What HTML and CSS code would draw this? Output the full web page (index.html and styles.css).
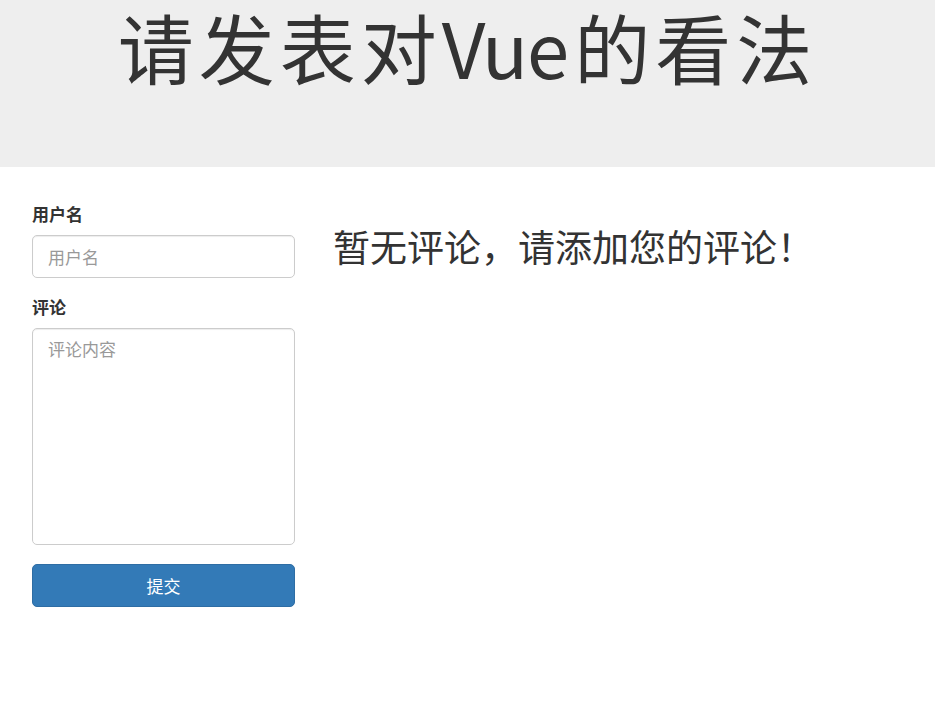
FILE: index.html
```html
<!DOCTYPE html>
<html lang="zh-CN">
<head>
<meta charset="utf-8">
<title>Vue</title>
<link rel="stylesheet" href="styles.css">
</head>
<body>
<div class="jumbotron">
  <h1 class="title">请发表对<span class="latin">Vue</span>的看法</h1>
</div>
<div class="main">
  <form class="form">
    <div class="group">
      <label class="label">用户名</label>
      <input class="control input" type="text" placeholder="用户名">
    </div>
    <div class="group">
      <label class="label">评论</label>
      <textarea class="control textarea" placeholder="评论内容"></textarea>
    </div>
    <button class="btn" type="button">提交</button>
  </form>
  <div class="list">
    <h2 class="empty">暂无评论，请添加您的评论！</h2>
  </div>
</div>
</body>
</html>
```
FILE: styles.css
```css
* { box-sizing: border-box; }
html, body { margin: 0; padding: 0; }
body {
  font-family: "Noto Sans CJK SC", "Liberation Sans", sans-serif;
  font-size: 17px;
  color: #333;
  background: #fff;
}
.jumbotron {
  background: #eee;
  height: 167px;
}
.title {
  margin: 0;
  font-size: 76px;
  font-weight: 400;
  line-height: 92px;
  text-align: center;
  color: #333;
  letter-spacing: 5px;
}
.latin {
  letter-spacing: -1px;
  margin-right: 6px;
}
.main {
  display: flex;
  padding: 34px 32px 0 32px;
  gap: 38px;
}
.form {
  width: 263px;
  flex: none;
}
.group {
  margin-bottom: 16px;
}
.label {
  display: block;
  font-weight: 700;
  font-size: 17px;
  line-height: 25px;
  margin-bottom: 9px;
}
.control {
  display: block;
  width: 100%;
  border: 1px solid #ccc;
  border-radius: 5px;
  padding: 7px 15px;
  font-family: inherit;
  font-size: 17px;
  color: #555;
  background: #fff;
  box-shadow: inset 0 1px 1px rgba(0,0,0,.075);
}
.control::placeholder { color: #999; }
.input { height: 43px; }
.textarea { height: 217px; resize: none; }
.btn {
  display: block;
  width: 100%;
  height: 43px;
  margin-top: 19px;
  background: #337ab7;
  border: 1px solid #2e6da4;
  border-radius: 5px;
  color: #fff;
  font-family: inherit;
  font-size: 17px;
}
.list { flex: 1; }
.empty {
  margin: 20px 0 0 0;
  font-size: 37px;
  font-weight: 400;
  line-height: 50px;
  color: #333;
}
```
